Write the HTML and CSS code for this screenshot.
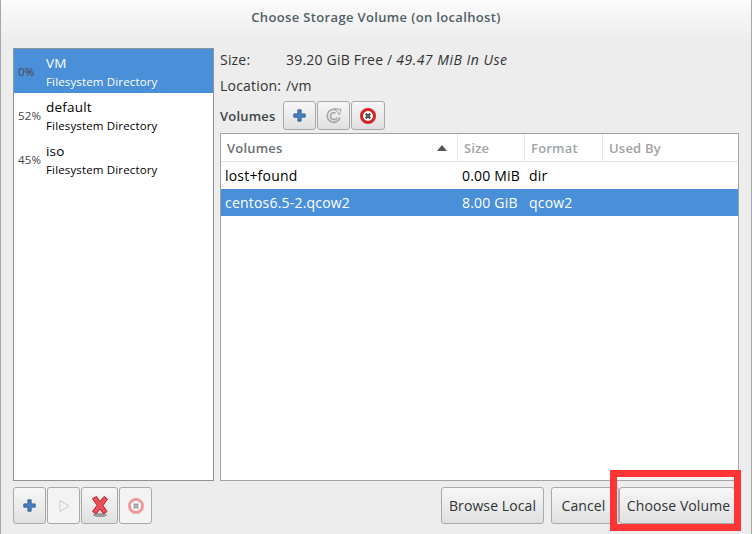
FILE: index.html
```html
<!DOCTYPE html>
<html lang="en">
<head>
<meta charset="utf-8">
<title>Choose Storage Volume</title>
<link rel="stylesheet" href="styles.css">
</head>
<body>
<div class="window">
  <header class="titlebar">Choose Storage Volume (on localhost)</header>
  <main class="main">
    <section class="pools">
      <div class="pool selected"><span class="pct">0%</span><div class="pool-text"><div class="name">VM</div><div class="kind">Filesystem Directory</div></div></div>
      <div class="pool"><span class="pct">52%</span><div class="pool-text"><div class="name">default</div><div class="kind">Filesystem Directory</div></div></div>
      <div class="pool"><span class="pct">45%</span><div class="pool-text"><div class="name">iso</div><div class="kind">Filesystem Directory</div></div></div>
    </section>
    <section class="detail">
      <div class="info"><span class="label">Size:</span><span>39.20 GiB Free / <em>49.47 MiB In Use</em></span></div>
      <div class="info loc"><span class="label">Location:</span><span>/vm</span></div>
      <div class="vol-bar">
        <strong class="vol-title">Volumes</strong>
        <div class="tools">
          <button class="btn icon w34"><svg width="13" height="13" viewBox="0 0 16 16"><path class="plus" d="M6 1h4v5h5v4h-5v5H6v-5H1V6h5z"/></svg></button>
          <button class="btn icon w34"><svg width="18" height="18" viewBox="0 0 18 18"><path class="refresh" d="M15 10.500A6.500 6.500 0 1 1 11.500 3M12.200 10.500A3.500 3.500 0 1 1 10.500 6"/><path class="refresh-tip" d="M10 1.500l6 1-1.500 5.500z"/></svg></button>
          <button class="btn icon w35"><svg width="18" height="18" viewBox="0 0 18 18"><circle class="ring" cx="9" cy="9" r="6.500"/><path class="cross" d="M6.700 6.700l4.600 4.600M11.300 6.700l-4.600 4.600"/></svg></button>
        </div>
      </div>
      <div class="table">
        <div class="thead">
          <div class="th c1 dark">Volumes<span class="sort"></span></div>
          <div class="th c2">Size</div>
          <div class="th c3">Format</div>
          <div class="th c4">Used By</div>
        </div>
        <div class="row"><div class="td c1">lost+found</div><div class="td c2">0.00 MiB</div><div class="td c3">dir</div></div>
        <div class="row selected"><div class="td c1">centos6.5-2.qcow2</div><div class="td c2">8.00 GiB</div><div class="td c3">qcow2</div></div>
      </div>
    </section>
  </main>
  <footer class="footer">
    <div class="tools">
      <button class="btn icon w34"><svg width="13" height="13" viewBox="0 0 16 16"><path class="plus" d="M6 1h4v5h5v4h-5v5H6v-5H1V6h5z"/></svg></button>
      <button class="btn icon w34 off"><svg width="14" height="16" viewBox="0 0 14 16"><path class="play" d="M3 2.500L12 8l-9 5.500z"/></svg></button>
      <button class="btn icon w38"><svg width="22" height="24" viewBox="0 0 22 24"><ellipse class="shadow" cx="11" cy="21" rx="7" ry="2"/><path class="redx" d="M3.500 4.500L7.500 2.500 11 7.500 15 2.500 18.500 5 14 11.500 18 17.500 14.500 20 11 15 7 20 3.500 17.500 8 11.500z"/></svg></button>
      <button class="btn icon w34 off"><svg width="18" height="18" viewBox="0 0 18 18"><circle class="ring soft" cx="9" cy="9" r="6.500"/><path class="cross soft" d="M6.700 6.700l4.600 4.600M11.300 6.700l-4.600 4.600"/></svg></button>
    </div>
    <div class="actions">
      <button class="btn text browse">Browse Local</button>
      <div class="pair">
        <button class="btn text cancel">Cancel</button>
        <button class="btn text choose">Choose Volume</button>
      </div>
    </div>
  </footer>
  <div class="highlight"></div>
</div>
</body>
</html>
```
FILE: styles.css
```css
* { box-sizing: border-box; }
html, body { margin: 0; padding: 0; }
body { width: 752px; height: 534px; overflow: hidden; font-family: "Open Sans", "DejaVu Sans", sans-serif; font-size: 14px; letter-spacing: 0.2px; color: #2e3436; }
.window { position: relative; width: 752px; height: 534px; display: flex; flex-direction: column; background: #ededed; border-left: 1px solid #a8a8a8; border-right: 1px solid #a8a8a8; }
.titlebar { height: 48px; padding-top: 8px; text-align: center; font-weight: 600; font-size: 13px; letter-spacing: 0.35px; line-height: 18px; color: #4f5f66; background: linear-gradient(#fbfbfb, #ededed 40px); }
.main { display: flex; gap: 6px; height: 433px; padding: 0 12px; }
.pools { width: 201px; height: 433px; background: #fff; border: 1px solid #8d9499; color: #000; }
.pool { display: flex; align-items: center; height: 44px; }
.pool.selected { background: #4a90d9; color: #fff; }
.pct { width: 32px; padding-left: 4px; font-size: 11.500px; color: #444; }
.pool-text { display: flex; flex-direction: column; align-self: flex-start; padding-top: 5px; }
.name { font-size: 13.500px; line-height: 18px; }
.kind { font-size: 11.500px; letter-spacing: 0.15px; line-height: 18px; margin-top: 1px; }
.detail { flex: 1; display: flex; flex-direction: column; min-width: 0; }
.info { display: flex; height: 22px; align-items: center; color: #333; }
.info .label { width: 66px; }
.info em { font-style: italic; letter-spacing: 0.5px; }
.loc { margin-top: 4px; }
.vol-bar { display: flex; align-items: center; height: 29px; margin-top: 5px; }
.vol-title { width: 63px; font-size: 13px; font-weight: 600; color: #3c4447; }
.tools { display: flex; gap: 1px; }
.btn { display: flex; align-items: center; justify-content: center; padding: 0; border: 1px solid #a9a9a9; border-radius: 3px; background: linear-gradient(#f7f7f7, #e0e0e0); font-family: inherit; font-size: 14px; letter-spacing: 0.1px; color: #2e3436; }
.icon { height: 29px; }
.footer .icon { height: 37px; }
.w34 { width: 33px; }
.w35 { width: 34px; }
.w38 { width: 37px; }
.off { background: #f3f3f3; }
.table { height: 348px; margin-top: 3px; background: #fff; border: 1px solid #a3a3a3; color: #000; }
.thead { display: flex; height: 28px; border-bottom: 1px solid #e3e3e3; }
.th { display: flex; align-items: center; font-weight: 600; font-size: 13px; color: #a0a4a6; padding-left: 6px; border-right: 1px solid #e8e8e8; }
.th.dark { color: #6b6f71; position: relative; }
.th.c4 { border-right: 0; }
.sort { position: absolute; right: 10px; top: 11px; border-left: 5px solid transparent; border-right: 5px solid transparent; border-bottom: 6px solid #555; }
.c1 { width: 237px; }
.c2 { width: 67px; }
.c3 { width: 78px; }
.c4 { flex: 1; }
.row { display: flex; height: 27px; align-items: center; }
.row.selected { background: #4a90d9; color: #fff; }
.td { padding-left: 4px; font-size: 14px; }
.footer { display: flex; justify-content: space-between; padding: 6px 16px 0 12px; }
.actions { display: flex; gap: 7px; align-items: flex-start; }
.pair { display: flex; }
.text { height: 37px; }
.browse { width: 103px; }
.cancel { width: 68px; padding-right: 3px; }
.choose { width: 116px; padding-left: 3px; }
.plus { fill: #4a82c4; stroke: #24558f; stroke-width: 1; stroke-linejoin: round; }
.refresh { fill: none; stroke: #a6a6a6; stroke-width: 1.600; }
.refresh-tip { fill: #e8e8e8; stroke: #a6a6a6; stroke-width: 1; }
.ring { fill: #fff; stroke: #d81e1e; stroke-width: 3; }
.cross { fill: none; stroke: #555; stroke-width: 2.400; }
.ring.soft { stroke: #ec9c9c; }
.cross.soft { stroke: #a8a8a8; }
.play { fill: #f3f3f3; stroke: #c9c9c9; stroke-width: 1; }
.redx { fill: #ed4f58; stroke: #b5222c; stroke-width: 1; stroke-linejoin: round; }
.shadow { fill: #9a9a9a; }
.highlight { position: absolute; left: 609px; top: 470px; width: 131px; height: 61px; border: 7px solid #ff3535; pointer-events: none; }
```
